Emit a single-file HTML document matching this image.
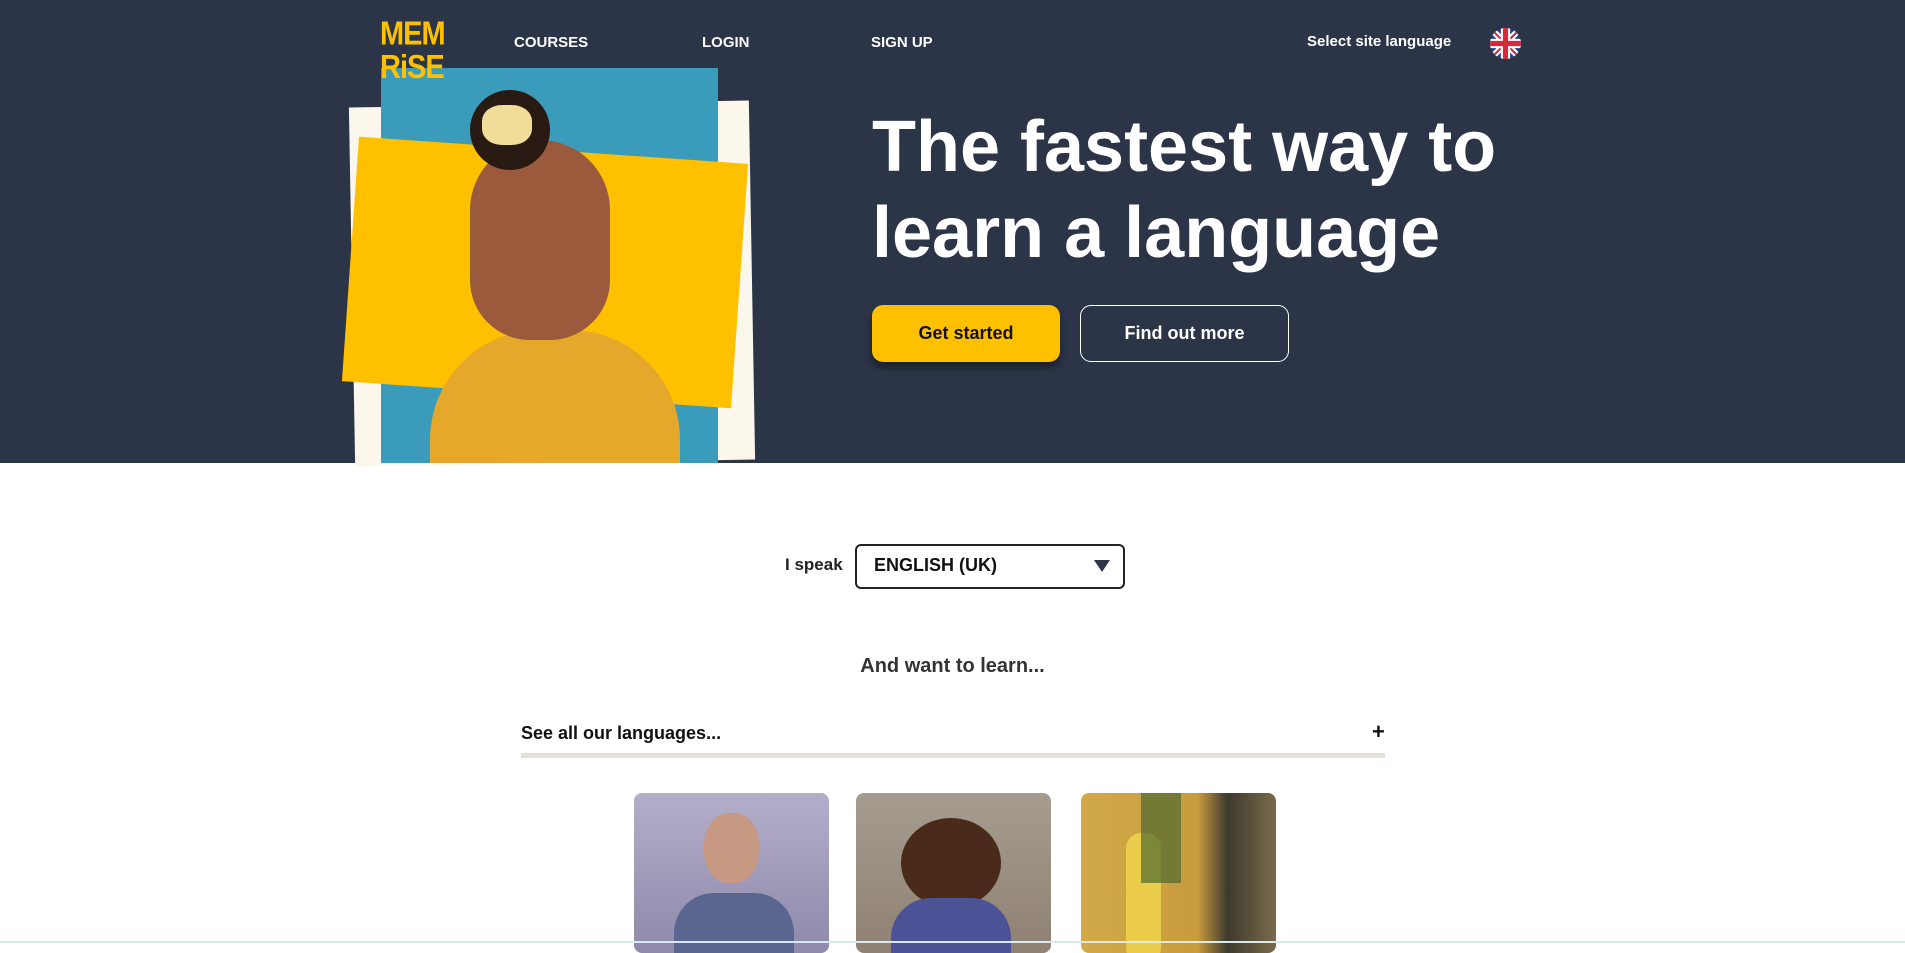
<!DOCTYPE html>
<html><head><meta charset="utf-8"><style>
*{margin:0;padding:0;box-sizing:border-box}
body{width:1905px;height:943px;overflow:hidden;background:#fff;font-family:"Liberation Sans",sans-serif;position:relative}
.hero{position:absolute;left:0;top:0;width:1905px;height:463px;background:#2b3547}
.a{position:absolute}
.nav{color:#fff;font-weight:bold;font-size:15px;top:34px}
.logo{left:380px;top:18px;color:#ffc000;font-weight:bold;font-size:29px;line-height:29px;letter-spacing:-1px;z-index:3;transform:scaleY(1.15);transform-origin:top left}
h1{position:absolute;left:872px;top:104px;color:#fff;font-size:72px;line-height:86px;letter-spacing:0;font-weight:bold}
.btn{position:absolute;top:305px;height:57px;border-radius:11px;font-weight:bold;font-size:18px;display:flex;align-items:center;justify-content:center}
.card{position:absolute;top:793px;width:195px;height:160px;border-radius:8px;overflow:hidden}
</style></head><body>
<div class="hero">
  <div class="a logo">MEM<br>RiSE</div>
  <div class="a nav" style="left:514px">COURSES</div>
  <div class="a nav" style="left:702px">LOGIN</div>
  <div class="a nav" style="left:871px">SIGN UP</div>
  <div class="a nav" style="left:1307px;top:33px;font-size:15px">Select site language</div>
  <svg class="a" style="left:1490px;top:28px" width="31" height="31" viewBox="0 0 30 30">
    <clipPath id="c"><circle cx="15" cy="15" r="15"/></clipPath>
    <g clip-path="url(#c)"><rect width="30" height="30" fill="#22408c"/>
    <path d="M0 0L30 30M30 0L0 30" stroke="#fff" stroke-width="6"/>
    <path d="M0 0L30 30M30 0L0 30" stroke="#d6293b" stroke-width="2"/>
    <path d="M15 0V30M0 15H30" stroke="#fff" stroke-width="9"/>
    <path d="M15 0V30M0 15H30" stroke="#d6293b" stroke-width="5"/></g>
  </svg>
  <div class="a" style="left:352px;top:104px;width:400px;height:359px;background:#fbf7ec;transform:rotate(-1deg)"></div>
  <div class="a" style="left:381px;top:68px;width:337px;height:395px;background:#3a9bbb"></div>
  <div class="a" style="left:350px;top:150px;width:390px;height:245px;background:#ffc000;transform:rotate(4deg)"></div>
  <div class="a" style="left:430px;top:330px;width:250px;height:133px;background:#e6a82a;border-radius:110px 110px 0 0"></div>
  <div class="a" style="left:470px;top:140px;width:140px;height:200px;background:#9b5a3c;border-radius:70px 70px 60px 60px"></div>
  <div class="a" style="left:470px;top:90px;width:80px;height:80px;background:#2a1a14;border-radius:50%"></div>
  <div class="a" style="left:482px;top:105px;width:50px;height:40px;background:#f1dc98;border-radius:40%"></div>
  <h1>The fastest way to<br>learn a language</h1>
  <div class="btn" style="left:872px;width:188px;background:#ffc000;color:#111;box-shadow:0 5px 8px rgba(0,0,0,.45)">Get started</div>
  <div class="btn" style="left:1080px;width:209px;border:1px solid #fff;color:#fff">Find out more</div>
</div>
<div class="a" style="left:785px;top:555px;font-weight:bold;font-size:17px;color:#222">I speak</div>
<div class="a" style="left:855px;top:544px;width:270px;height:45px;border:2px solid #222;border-radius:6px;font-weight:bold;font-size:18px;color:#111;padding:9px 0 0 17px">ENGLISH (UK)
  <svg class="a" style="left:237px;top:14px" width="16" height="12"><path d="M0 0H16L8 12Z" fill="#2b3547"/></svg></div>
<div class="a" style="left:0;width:1905px;top:655px;text-align:center;font-weight:bold;font-size:20px;color:#333">And want to learn...</div>
<div class="a" style="left:521px;top:723px;font-weight:bold;font-size:18px;color:#111">See all our languages...</div>
<div class="a" style="left:1372px;top:719px;font-weight:bold;font-size:22px;color:#111">+</div>
<div class="a" style="left:521px;top:753px;width:864px;height:5px;background:#e3e0d8"></div>
<div class="card" style="left:634px;background:linear-gradient(#b3aec9,#8f89ab)"><div class="a" style="left:70px;top:20px;width:55px;height:70px;border-radius:45%;background:#c79882"></div><div class="a" style="left:40px;top:100px;width:120px;height:70px;border-radius:40px 40px 0 0;background:#5a6690"></div></div>
<div class="card" style="left:856px;background:linear-gradient(#a59c90,#8f8173)"><div class="a" style="left:45px;top:25px;width:100px;height:90px;border-radius:50%;background:#4a2a1a"></div><div class="a" style="left:35px;top:105px;width:120px;height:70px;border-radius:40px 40px 0 0;background:#4c5296"></div></div>
<div class="card" style="left:1081px;background:linear-gradient(90deg,#d2aa4a,#c89b3c 60%,#3d3a2e 75%,#7a6a4a)"><div class="a" style="left:45px;top:40px;width:35px;height:130px;background:#eacb4a;border-radius:15px"></div><div class="a" style="left:60px;top:0;width:40px;height:90px;background:#4e6a30;opacity:.7"></div></div>
<div class="a" style="left:0;top:941px;width:1905px;height:2px;background:#d8eaf0"></div>
</body></html>
